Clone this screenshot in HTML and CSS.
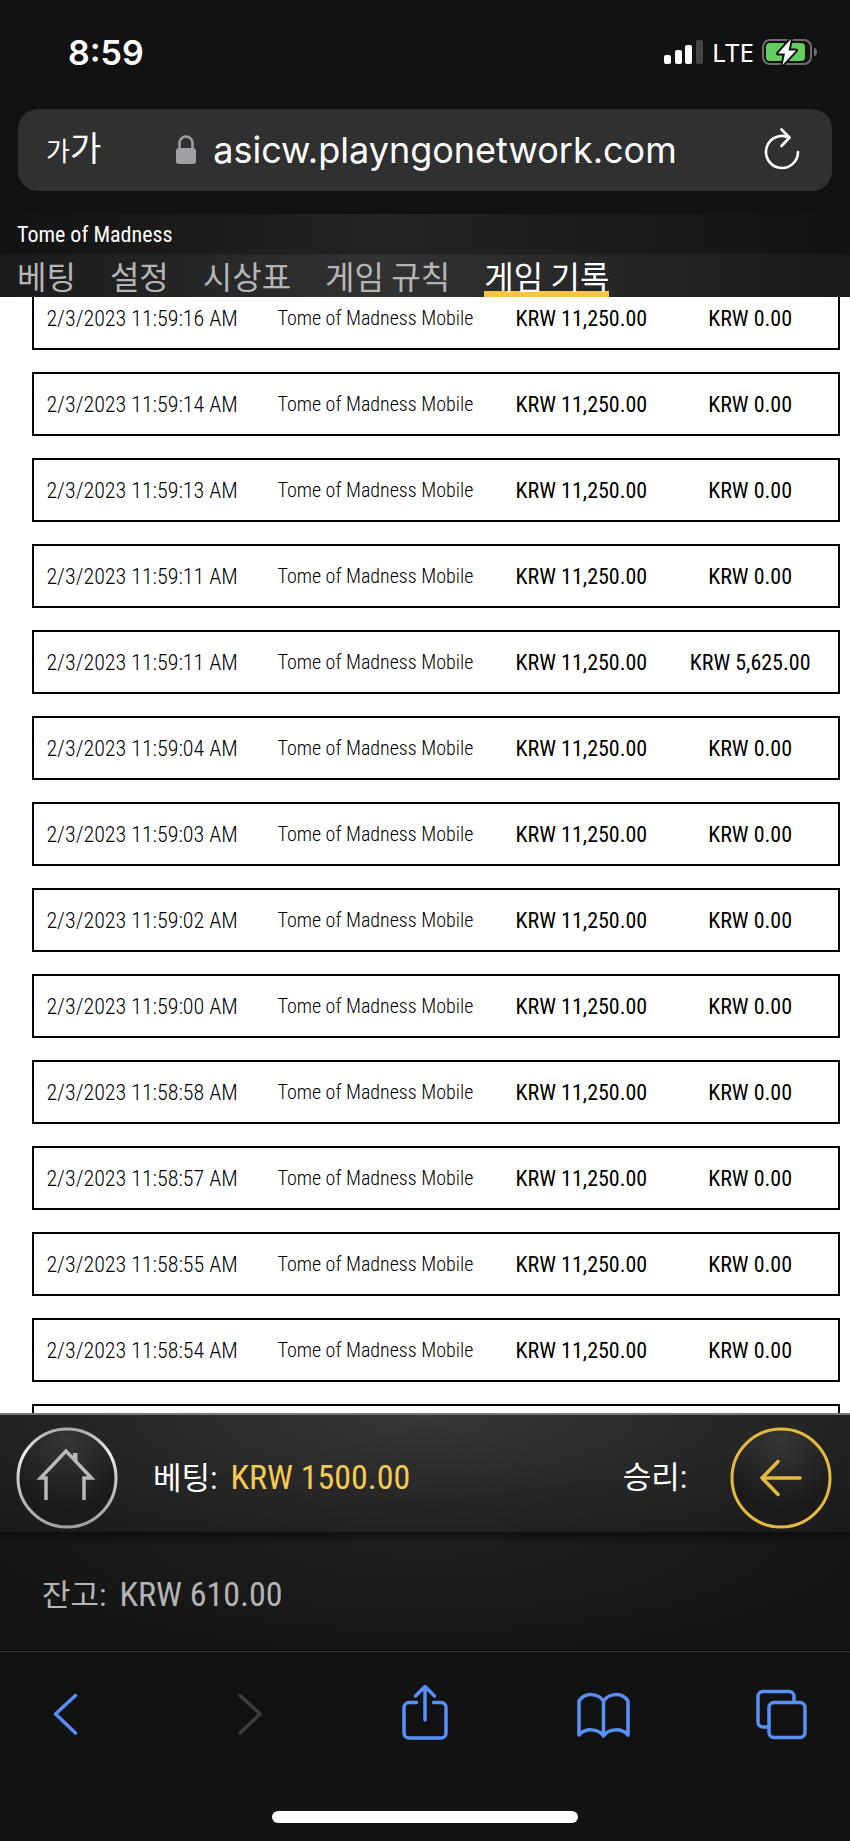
FILE: index.html
```
<!DOCTYPE html>
<html lang="ko">
<head>
    <meta charset="UTF-8">
    <meta name="viewport" content="width=device-width, initial-scale=1.0">
    <title>Tome of Madness</title>
    <link rel="stylesheet" href="styles.css">
</head>
<body>

    <div class="status-bar">
        <span class="time">8:59</span>
        <div class="status-icons">
            <svg class="signal" width="40" height="26" viewBox="0 0 40 26">
                <rect x="0" y="16" width="7" height="9" rx="2" fill="#fff"/>
                <rect x="11" y="11" width="7" height="14" rx="2" fill="#fff"/>
                <rect x="21" y="6" width="7" height="19" rx="2" fill="#fff"/>
                <rect x="32" y="1" width="7" height="24" rx="2" fill="#454545"/>
            </svg>
            <span class="network">LTE</span>
            <svg class="battery" width="56" height="28" viewBox="0 0 56 28">
                <rect x="1" y="2" width="48" height="24" rx="7" fill="none" stroke="#6d6d6d" stroke-width="2"/>
                <path d="M52 9.500c2 .8 3 2.500 3 4.500s-1 3.700-3 4.500z" fill="#6d6d6d"/>
                <rect x="4" y="5" width="39" height="18" rx="4" fill="#65ce62"/>
                <path d="M29 1L16 15.500h7L20.500 27 34 12.500h-7.500z" fill="#fff" stroke="#121212" stroke-width="4" stroke-linejoin="round" paint-order="stroke"/>
            </svg>
        </div>
    </div>

    <div class="address-bar">
        <button class="text-size" aria-label="글자 크기"><small>가</small>가</button>
        <a class="address" href="#">
            <svg width="22" height="30" viewBox="0 0 22 30">
                <path d="M4.500 14V8a6.500 6.500 0 0 1 13 0v6" fill="none" stroke="#a09fa6" stroke-width="2.500"/>
                <rect x="1" y="13" width="20" height="16" rx="3" fill="#a09fa6"/>
            </svg>
            asicw.playngonetwork.com
        </a>
        <button class="reload" aria-label="새로 고침">
            <svg width="36" height="44" viewBox="0 0 36 44" fill="none" stroke="#fff" stroke-width="2.600" stroke-linecap="round" stroke-linejoin="round">
                <path d="M34 24A16 16 0 1 1 25 9.600"/>
                <path d="M17.500 1.500l8 8-8 8.500"/>
            </svg>
        </button>
    </div>

    <header class="game-header">
        <h1>Tome of Madness</h1>
        <nav class="tabs">
            <a href="#">베팅</a>
            <a href="#">설정</a>
            <a href="#">시상표</a>
            <a href="#">게임 규칙</a>
            <a href="#" class="active">게임 기록</a>
        </nav>
    </header>

    <main class="history">
        <table>
            <colgroup>
                <col class="col-date">
                <col class="col-game">
                <col class="col-bet">
                <col class="col-win">
            </colgroup>
            <tbody>
                <tr><td>2/3/2023 11:59:16 AM</td><td class="game">Tome of Madness Mobile</td><td class="amount">KRW 11,250.00</td><td class="amount">KRW 0.00</td></tr>
                <tr><td>2/3/2023 11:59:14 AM</td><td class="game">Tome of Madness Mobile</td><td class="amount">KRW 11,250.00</td><td class="amount">KRW 0.00</td></tr>
                <tr><td>2/3/2023 11:59:13 AM</td><td class="game">Tome of Madness Mobile</td><td class="amount">KRW 11,250.00</td><td class="amount">KRW 0.00</td></tr>
                <tr><td>2/3/2023 11:59:11 AM</td><td class="game">Tome of Madness Mobile</td><td class="amount">KRW 11,250.00</td><td class="amount">KRW 0.00</td></tr>
                <tr><td>2/3/2023 11:59:11 AM</td><td class="game">Tome of Madness Mobile</td><td class="amount">KRW 11,250.00</td><td class="amount">KRW 5,625.00</td></tr>
                <tr><td>2/3/2023 11:59:04 AM</td><td class="game">Tome of Madness Mobile</td><td class="amount">KRW 11,250.00</td><td class="amount">KRW 0.00</td></tr>
                <tr><td>2/3/2023 11:59:03 AM</td><td class="game">Tome of Madness Mobile</td><td class="amount">KRW 11,250.00</td><td class="amount">KRW 0.00</td></tr>
                <tr><td>2/3/2023 11:59:02 AM</td><td class="game">Tome of Madness Mobile</td><td class="amount">KRW 11,250.00</td><td class="amount">KRW 0.00</td></tr>
                <tr><td>2/3/2023 11:59:00 AM</td><td class="game">Tome of Madness Mobile</td><td class="amount">KRW 11,250.00</td><td class="amount">KRW 0.00</td></tr>
                <tr><td>2/3/2023 11:58:58 AM</td><td class="game">Tome of Madness Mobile</td><td class="amount">KRW 11,250.00</td><td class="amount">KRW 0.00</td></tr>
                <tr><td>2/3/2023 11:58:57 AM</td><td class="game">Tome of Madness Mobile</td><td class="amount">KRW 11,250.00</td><td class="amount">KRW 0.00</td></tr>
                <tr><td>2/3/2023 11:58:55 AM</td><td class="game">Tome of Madness Mobile</td><td class="amount">KRW 11,250.00</td><td class="amount">KRW 0.00</td></tr>
                <tr><td>2/3/2023 11:58:54 AM</td><td class="game">Tome of Madness Mobile</td><td class="amount">KRW 11,250.00</td><td class="amount">KRW 0.00</td></tr>
                <tr><td></td><td></td><td></td><td></td></tr>
            </tbody>
        </table>
    </main>

    <div class="bet-bar">
        <button class="round-button" aria-label="홈">
            <svg width="104" height="104" viewBox="0 0 104 104">
                <defs>
                    <linearGradient id="silver" x1="0" y1="0" x2="0" y2="1">
                        <stop offset="0" stop-color="#aaa"/>
                        <stop offset=".25" stop-color="#eee"/>
                        <stop offset=".5" stop-color="#ccc"/>
                        <stop offset="1" stop-color="#a0a0a0"/>
                    </linearGradient>
                    <radialGradient id="dark" cx=".5" cy=".1" r=".7">
                        <stop offset="0" stop-color="#363636"/>
                        <stop offset="1" stop-color="#1b1b1b"/>
                    </radialGradient>
                </defs>
                <circle cx="52" cy="52" r="49" fill="url(#dark)" stroke="url(#silver)" stroke-width="3"/>
                <path d="M31 74V52H25.500L51 25 76.500 52H69v22" fill="none" stroke="#b9b9b9" stroke-width="3.500"/>
                <path d="M58 27h4.500v10L58 32z" fill="#b9b9b9"/>
            </svg>
        </button>
        <p class="bet">베팅: <strong>KRW 1500.00</strong></p>
        <p class="win">승리:</p>
        <button class="round-button" aria-label="뒤로">
            <svg width="104" height="104" viewBox="0 0 104 104" fill="none" stroke="#e3b93f" stroke-linecap="round" stroke-linejoin="round">
                <circle cx="52" cy="52" r="49" fill="url(#dark)" stroke-width="3"/>
                <path d="M71 52H33M49 35.500L33 52l16 16.500" stroke-width="3.500"/>
            </svg>
        </button>
    </div>

    <p class="balance">잔고: <span>KRW 610.00</span></p>

    <footer class="browser-bar">
        <div class="toolbar">
            <button aria-label="이전">
                <svg width="56" height="60" viewBox="0 0 56 60"><path d="M35.500 11.500L15.500 30l20 19"/></svg>
            </button>
            <button aria-label="다음" disabled>
                <svg width="56" height="60" viewBox="0 0 56 60"><path d="M21 11.500L41 30 21 49"/></svg>
            </button>
            <button aria-label="공유">
                <svg width="56" height="60" viewBox="0 0 56 60"><path d="M19.500 18.500H12a5 5 0 0 0-5 5V49a5 5 0 0 0 5 5h32a5 5 0 0 0 5-5V23.500a5 5 0 0 0-5-5h-7.500M28 36V3M18.500 12L28 2.500l9.500 9.500"/></svg>
            </button>
            <button aria-label="책갈피">
                <svg width="56" height="60" viewBox="0 0 56 60"><path d="M27.500 17C22 9 9 8 3 17v34C9 44 22 44 27.500 52 33 44 46 44 52 51V17C46 8 33 9 27.500 17zV51"/></svg>
            </button>
            <button aria-label="탭">
                <svg width="56" height="60" viewBox="0 0 56 60"><rect x="15" y="18.500" width="36" height="35" rx="5"/><path d="M15 43H9a5 5 0 0 1-5-5V12.500a5 5 0 0 1 5-5h26a5 5 0 0 1 5 5v6"/></svg>
            </button>
        </div>
        <div class="home-indicator"></div>
    </footer>

</body>
</html>
```
FILE: styles.css
```
* {
    box-sizing: border-box;
}

body {
    margin: 0;
    height: 100vh;
    display: flex;
    flex-direction: column;
    background-color: #121212;
    color: #fff;
    font-family: Inter, "Noto Sans CJK KR", sans-serif;
}

h1, p {
    margin: 0;
    font-weight: normal;
}

a {
    color: inherit;
    text-decoration: none;
}

button {
    padding: 0;
    border: none;
    background: none;
    color: inherit;
    font-family: inherit;
    cursor: pointer;
}

svg {
    display: block;
}

/* Phone status bar */
.status-bar {
    display: flex;
    justify-content: space-between;
    align-items: center;
    height: 104px;
    padding: 0 32px 0 68px;
}

.time {
    font-size: 34px;
    font-weight: 600;
}

.status-icons {
    display: flex;
    align-items: center;
    gap: 8px;
}

.network {
    font-family: "Noto Sans", sans-serif;
    font-size: 26px;
    line-height: 28px;
}

/* Address bar */
.address-bar {
    display: flex;
    align-items: center;
    height: 82px;
    margin: 5px 18px 23px;
    padding: 0 32px 0 28px;
    border-radius: 20px;
    background-color: #303030;
}

.text-size {
    font-size: 34px;
    line-height: 40px;
}

.text-size small {
    font-size: 26px;
}

.address {
    display: flex;
    align-items: center;
    gap: 16px;
    margin: 0 auto 0 74px;
    font-size: 36px;
}

/* Game header */
.game-header {
    font-family: "Roboto Condensed", "Liberation Sans Narrow", "Noto Sans CJK KR", sans-serif;
}

.game-header h1 {
    padding-left: 17px;
    font-size: 22px;
    line-height: 42px;
    height: 40px;
    background: linear-gradient(to right, #121212, #242424 45%, #121212);
}

.tabs {
    display: flex;
    gap: 34px;
    height: 43px;
    padding-left: 17px;
    background: linear-gradient(to right, #1a1a1a, #323232 45%, #1a1a1a);
    color: #b5b5b5;
    font-size: 32px;
    line-height: 48px;
}

.tabs .active {
    border-bottom: 6px solid #f7c544;
    color: #fff;
}

/* Game history, already scrolled down a little */
.history {
    flex: 1;
    min-height: 0;
    overflow: hidden;
    background-color: #fff;
    color: #000;
}

.history table {
    width: calc(100% - 42px);
    margin: -33px 10px 0 32px;
    table-layout: fixed;
    border-collapse: separate;
    border-spacing: 0 22px;
    font-family: "Roboto Condensed", "Liberation Sans Narrow", sans-serif;
    font-size: 22px;
}

.col-date { width: 27%; }
.col-game { width: 31%; }
.col-bet { width: 20%; }
.col-win { width: 22%; }

.history td {
    height: 64px;
    padding: 0;
    border-top: 2px solid #000;
    border-bottom: 2px solid #000;
    font-weight: 300;
    text-align: center;
    white-space: nowrap;
}

.history td:first-child {
    border-left: 2px solid #000;
}

.history td:last-child {
    border-right: 2px solid #000;
}

.history .game {
    font-size: 20px;
}

.history .amount {
    font-weight: 400;
}

/* Bet and win bar */
.bet-bar {
    display: flex;
    align-items: center;
    height: 119px;
    padding: 9px 17px 0 15px;
    border-top: 2px solid #777;
    background: radial-gradient(ellipse at 50% 0, #363636, #272727 50%, #1a1a1a);
}

.bet-bar, .balance {
    font-family: "Roboto Condensed", "Liberation Sans Narrow", "Noto Sans CJK KR", sans-serif;
    font-size: 31px;
    line-height: 48px;
}

.bet {
    flex: 1;
    padding-left: 34px;
}

.bet strong {
    padding-left: 6px;
    color: #f7cb52;
    font-size: 34px;
    font-weight: 400;
}

.win {
    padding-right: 42px;
}

.balance {
    height: 119px;
    padding: 38px 42px 0;
    border-bottom: 1px solid #000;
    background: linear-gradient(#0f0f0f, transparent 12px), radial-gradient(ellipse at 50% 0, #212121, #151515 75%);
    color: #b5b5b5;
}

.balance span {
    padding-left: 6px;
    font-size: 34px;
}

/* Browser toolbar */
.browser-bar {
    height: 190px;
    padding-top: 32px;
    border-top: 1px solid #333;
}

.toolbar {
    display: flex;
    justify-content: space-between;
    padding: 0 40px;
}

.toolbar svg {
    fill: none;
    stroke: #5990f7;
    stroke-width: 3.5px;
    stroke-linecap: round;
    stroke-linejoin: round;
}

.toolbar button:disabled svg {
    stroke: #3d3d3d;
}

.home-indicator {
    width: 36%;
    height: 12px;
    margin: 67px auto 0;
    border-radius: 6px;
    background-color: #fff;
}
```
